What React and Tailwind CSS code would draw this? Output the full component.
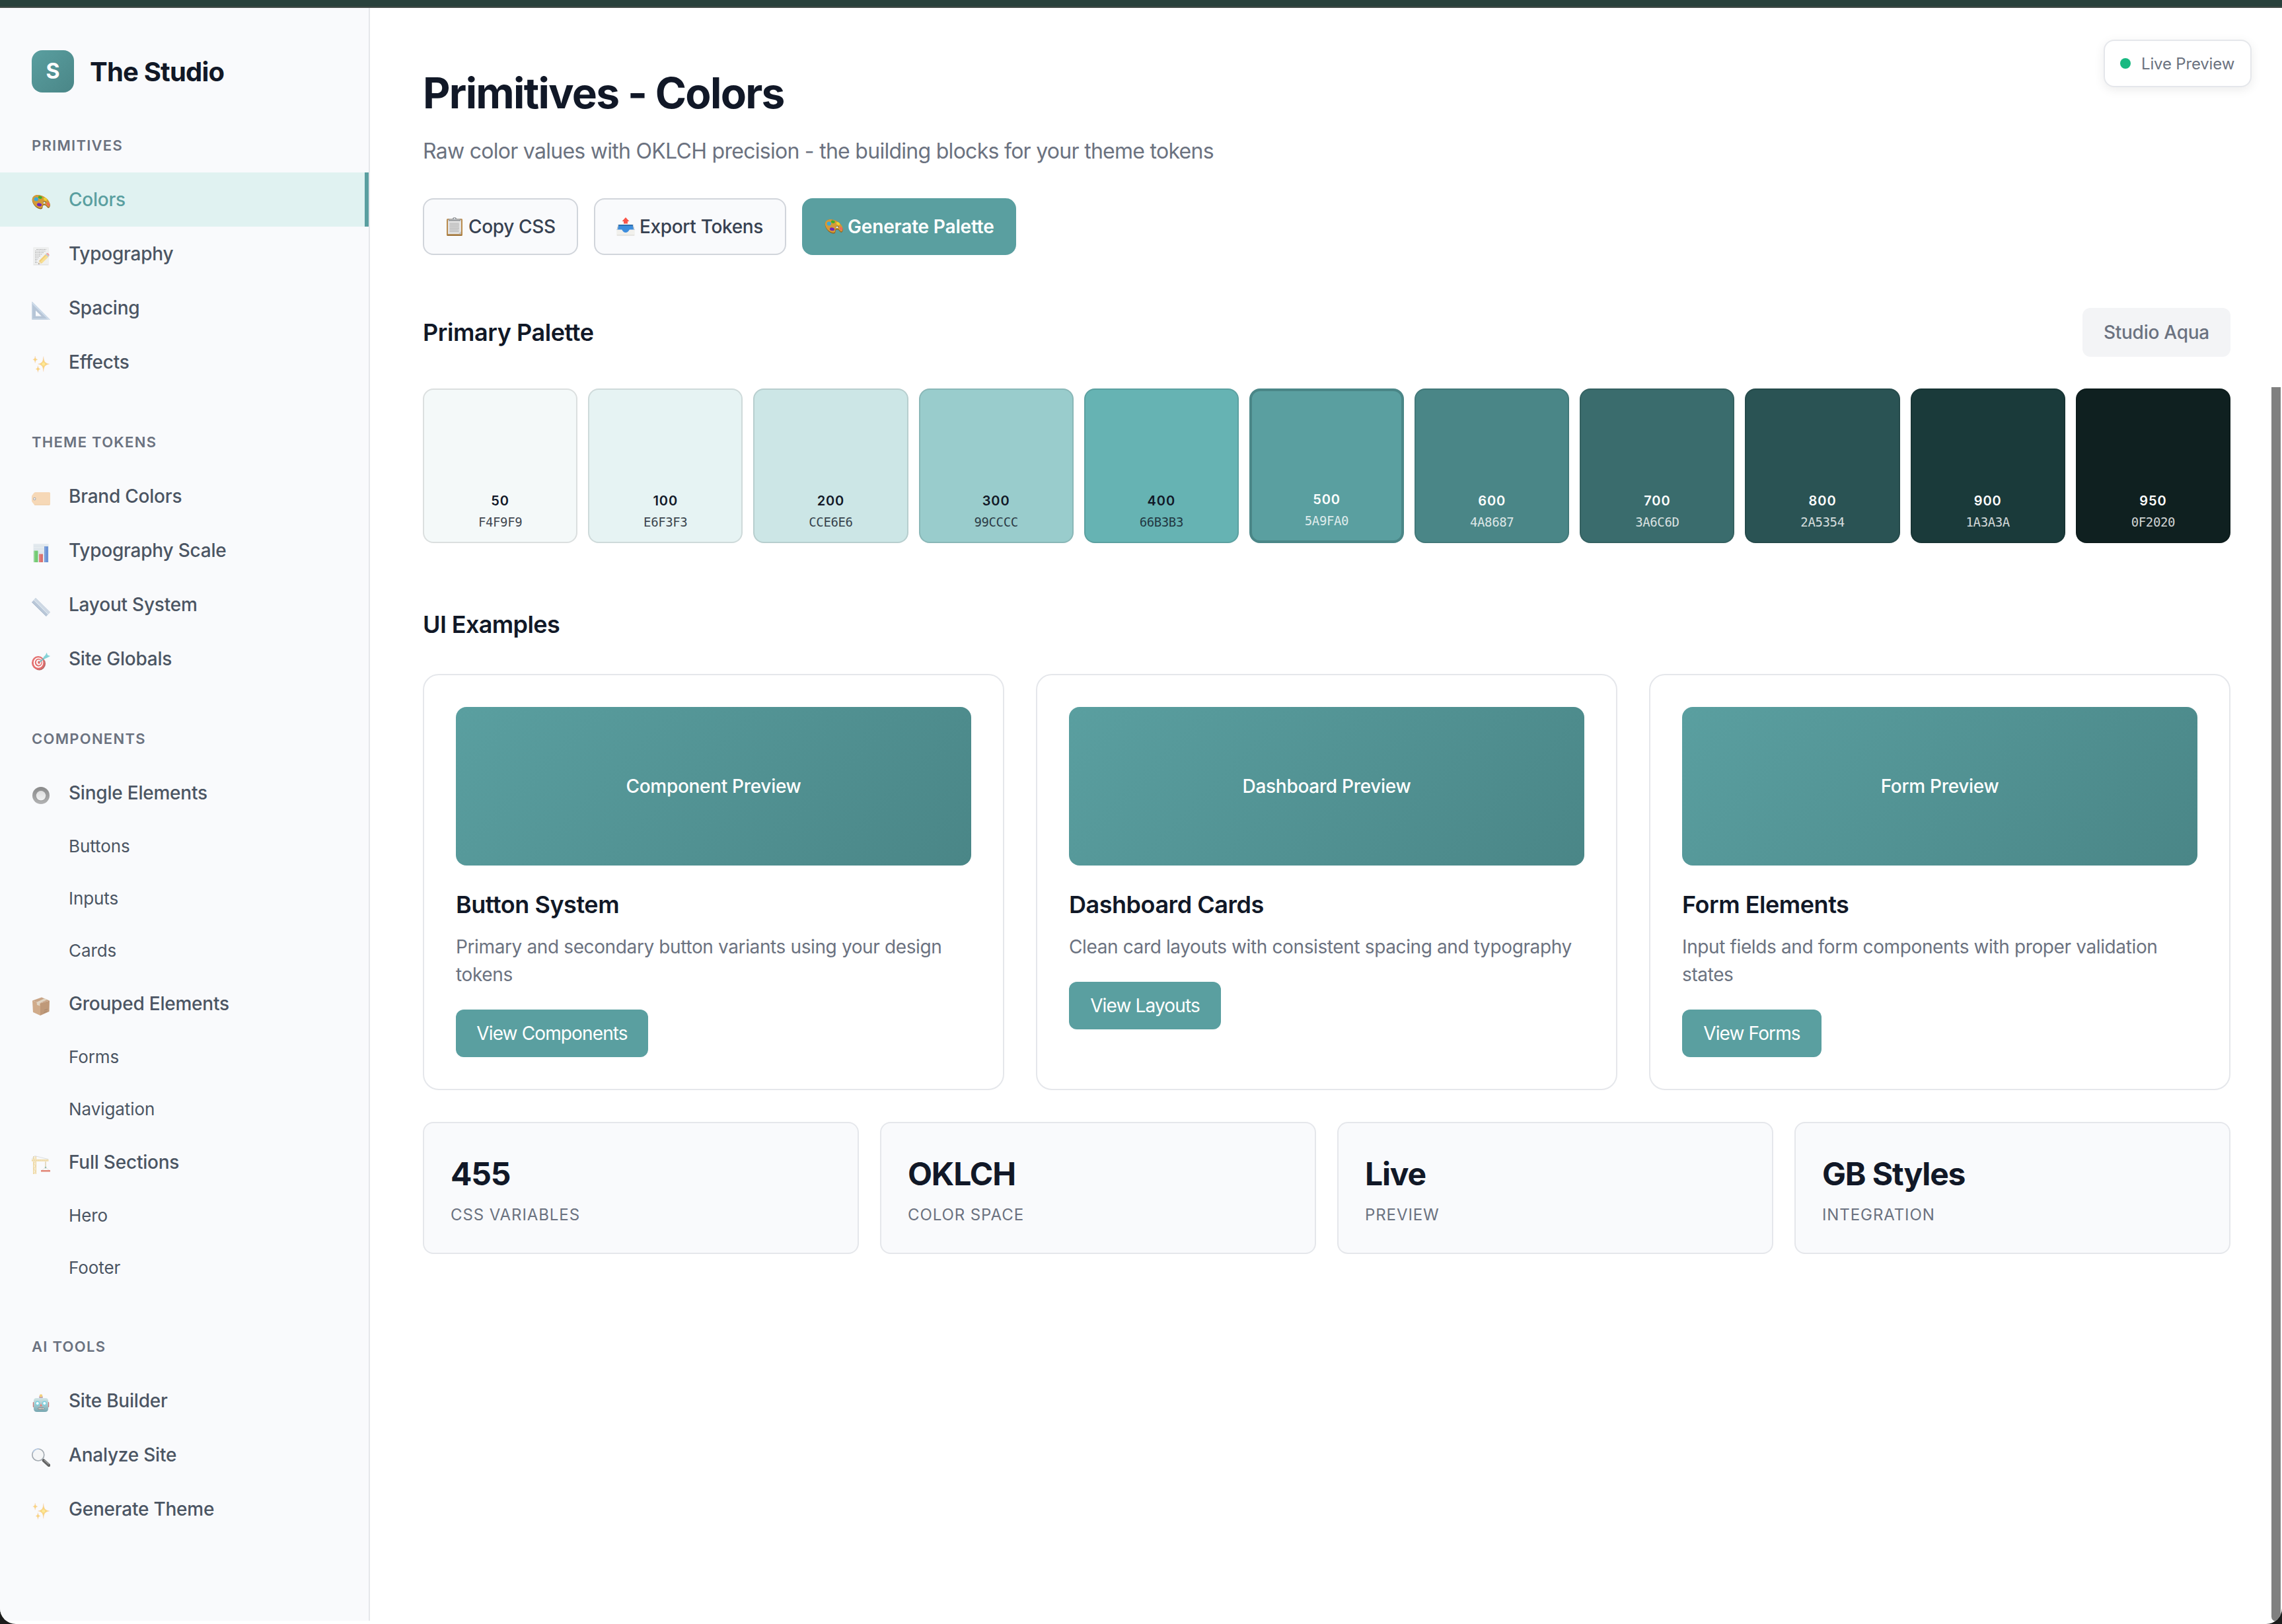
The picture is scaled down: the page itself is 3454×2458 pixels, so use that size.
const PaletteIcon = () => (
  <svg viewBox="0 0 28 28" className="size-7 shrink-0">
    <path d="M1 13C-.5 6 5 2.500 11 3.500C19 4.500 27 11 27.800 18C28 21.500 26 23.500 24.500 22.500C22.500 21 21.500 18 18.500 18.500C15.500 19 17.500 22 15.500 24C12.500 26 3 21.500 1 13Z" fill="#8f5a14" />
    <path d="M1 12C-.2 5.500 5 2.500 11 3.200C19 4 26.800 10.500 27.600 17C27.800 20.500 26 22.300 24.500 21.300C22.500 19.800 21.500 16.800 18.300 17.300C15 17.800 17.300 21 15.300 22.700C12.500 24.700 3 20.500 1 12Z" fill="#d39a38" />
    <ellipse cx="6.800" cy="9.500" rx="3.200" ry="3" fill="#3aa9d8" />
    <ellipse cx="12.800" cy="6.800" rx="3" ry="2.100" fill="#3fae2c" transform="rotate(15 12.8 6.800)" />
    <ellipse cx="20.500" cy="9.500" rx="3" ry="2" fill="#efd02f" transform="rotate(35 20.500 9.500)" />
    <ellipse cx="25" cy="17" rx="1.700" ry="3" fill="#f0675c" transform="rotate(-25 25 17)" />
    <ellipse cx="11.500" cy="17.800" rx="3.600" ry="2.400" fill="#7226b8" transform="rotate(10 11.500 17.800)" />
    <ellipse cx="19.300" cy="14.500" rx="2.200" ry="1.700" fill="#5c4218" />
    <ellipse cx="19.100" cy="14.900" rx="1.700" ry="1.300" fill="#e5f3f1" />
  </svg>
);

const MemoIcon = () => (
  <svg viewBox="0 0 28 28" className="size-7 shrink-0">
    <rect x="2.500" y="0.500" width="23" height="27" fill="#dcdcdc" />
    <rect x="3" y="0.500" width="22" height="25.500" fill="#ececec" />
    <g stroke="#8e8e8e" strokeWidth="0.900" strokeDasharray="2.600 .7 1.500 .6">
      <path d="M7 3.500H22M5 6H21M5 8.500H18M5 11H16M5 13.500H13M5 16H11M5 18.500H9M5 21H8M5 23.500H9" />
    </g>
    <path d="M10 26L11.500 20.500L20.500 11.200L24.800 15L15.500 24.200Z" fill="#eeba3c" />
    <path d="M13 22L22.300 12.600L24.800 15L15.500 24.200Z" fill="#f7d468" />
    <path d="M10 26L11.300 21.300L14.800 24.500Z" fill="#eed9b4" />
    <path d="M10 26L10.500 24.200L11.900 25.500Z" fill="#444" />
    <path d="M20.500 11.200L22 9.700L26.200 13.500L24.800 15Z" fill="#a3b9c2" />
    <path d="M22 9.700C23.800 7.500 28 10.800 26.200 13.500Z" fill="#ee7679" />
  </svg>
);

const TriangleIcon = () => (
  <svg viewBox="0 0 28 28" className="size-7 shrink-0">
    <path d="M0.500 0.500L28 28H0.500ZM6 14V22.500H14.800Z" fill="#9aafc8" fillRule="evenodd" />
    <path d="M0.500 0.500L28 28H25L0.500 4Z" fill="#b9cde1" />
    <path d="M1 26.900H27" stroke="#c4d5e5" strokeWidth="1.200" />
    <path d="M1 4V27" stroke="#a9bfd5" />
  </svg>
);

const SparklesIcon = () => (
  <svg viewBox="0 0 28 28" className="size-7 shrink-0">
    <g fill="#f8c64b" stroke="#f9a97e" strokeOpacity="0.500" strokeWidth="0.500">
      <path d="M17.800 1.500C18.600 9.500 19.600 11.500 26.800 13C19.600 14.500 18.600 16.500 17.800 24.500C17 16.500 16 14.500 9.500 13C16 11.500 17 9.500 17.800 1.500Z" />
      <path d="M5.200 1C5.700 4.600 6.300 5.500 9 6.200C6.300 6.900 5.700 7.800 5.200 11.400C4.700 7.800 4.200 6.900 1.800 6.200C4.200 5.500 4.700 4.600 5.200 1Z" />
      <path d="M9.400 15.500C9.900 19 10.500 19.900 13.200 20.600C10.500 21.300 9.900 22.200 9.400 25.600C8.900 22.200 8.400 21.300 6 20.600C8.400 19.900 8.900 19 9.400 15.500Z" />
    </g>
    <circle cx="17.800" cy="13" r="2.500" fill="#ffe16a" />
  </svg>
);

const TagIcon = () => (
  <svg viewBox="0 0 28 28" className="size-7 shrink-0">
    <path d="M5.500 4H26.500Q28 4 28 5.500V22Q28 23.500 26.500 23.500H5.500Q4.500 23.500 3.500 22.500L.8 19Q0 18 0 17V10.500Q0 9.500 .8 8.500L3.500 5Q4.500 4 5.500 4Z" fill="#f6cb9b" />
    <path d="M4 23H27" stroke="#e9b57d" strokeWidth="0.900" />
    <circle cx="4.300" cy="14" r="2.200" fill="#8c8685" />
    <circle cx="4.300" cy="14" r="1.200" fill="#f5f5f5" />
  </svg>
);

const ChartIcon = () => (
  <svg viewBox="0 0 28 28" className="size-7 shrink-0">
    <rect x="2.500" y="0" width="23" height="28" fill="#dce4ea" />
    <path d="M3 3.500H25M3 8H25M3 13H25M3 18H25" stroke="#c6d2dc" strokeWidth="0.700" />
    <rect x="3.300" y="10.500" width="6.200" height="17.500" fill="#3db83a" />
    <rect x="11" y="15.500" width="6" height="12.500" fill="#d03934" />
    <rect x="19" y="4" width="6" height="24" fill="#3169c6" />
    <path d="M4.500 11V28M12.300 16V28M20.300 4.500V28" stroke="#fff" strokeOpacity="0.250" />
  </svg>
);

const RulerIcon = () => (
  <svg viewBox="0 0 28 28" className="size-7 shrink-0">
    <path d="M6 0L28 21.500L22 28L0 6.500Z" fill="#9fb2c9" />
    <path d="M6 0L28 21.500L25.800 23.800L3.800 2.400Z" fill="#bccbdb" />
    <path d="M3.500 3L25 24.500" stroke="#d4e0ea" strokeWidth="1.200" />
    <path d="M.5 6.500L22 27.500" stroke="#8aa0ba" />
  </svg>
);

const TargetIcon = () => (
  <svg viewBox="0 0 28 28" className="size-7 shrink-0">
    <ellipse cx="11.500" cy="17.500" rx="9.500" ry="10" fill="#9c2c2c" />
    <ellipse cx="9.800" cy="16.300" rx="9.800" ry="10.300" fill="#dc3533" />
    <ellipse cx="10" cy="16" rx="7.300" ry="7.800" fill="#fff" />
    <ellipse cx="10.300" cy="15.800" rx="5.600" ry="6" fill="#dc3533" />
    <ellipse cx="10.700" cy="15.600" rx="3.800" ry="4.100" fill="#fff" />
    <ellipse cx="11" cy="15.500" rx="2" ry="2.200" fill="#dc3533" />
    <path d="M12 15L19.500 8.500" stroke="#35a8ad" strokeWidth="1.700" />
    <path d="M17.500 8L20.800 4.500L22.700 .7L24 4.500L28 6L23.500 8.500L19.500 10.300Z" fill="#55c3c8" />
  </svg>
);

const RadioIcon = () => (
  <svg viewBox="0 0 28 28" className="size-7 shrink-0">
    <defs>
      <linearGradient id="rim" x1="0" y1="0" x2="0" y2="1">
        <stop offset="0" stopColor="#5a5a5a" />
        <stop offset="1" stopColor="#969696" />
      </linearGradient>
      <linearGradient id="knob" x1="0" y1="0" x2="0" y2="1">
        <stop offset="0" stopColor="#d2d2d2" />
        <stop offset="1" stopColor="#efefef" />
      </linearGradient>
    </defs>
    <circle cx="14" cy="14" r="13" fill="url(#rim)" />
    <circle cx="14" cy="14" r="8.300" fill="#6d6d6d" />
    <circle cx="14" cy="14.300" r="7.300" fill="url(#knob)" />
  </svg>
);

const BoxIcon = () => (
  <svg viewBox="0 0 28 28" className="size-7 shrink-0">
    <path d="M1 5.500L13 9.500V28L2 23Z" fill="#c08a5b" />
    <path d="M27 5.500L13 9.500V28L26.500 22Z" fill="#a77143" />
    <path d="M1 5.500L15 .5L27 5.500L13 9.500Z" fill="#b68256" />
    <path d="M7.500 7.800L19.500 2.200L23.500 3.900L12 9.500L12.500 13.500L8 12Z" fill="#d8c6ad" />
    <path d="M19 20L24 18.300M18 23.500L23 21.700" stroke="#80532d" strokeWidth="0.900" />
  </svg>
);

const CraneIcon = () => (
  <svg viewBox="0 0 28 28" className="size-7 shrink-0">
    <path d="M2.500 1H6.500V28H2.500Z" fill="#f6e8c0" />
    <path d="M2.500 4L6.500 8L2.500 12L6.500 16L2.500 20L6.500 24L2.500 28M2.500 1V28M6.500 1V28" stroke="#e5bf6c" strokeWidth="0.900" fill="none" />
    <rect x="0" y="5.500" width="25.500" height="3.500" fill="#f1dca4" />
    <path d="M0 7.200H25" stroke="#dfba65" strokeDasharray="1.500 1.500" />
    <path d="M0 5.500L4.500 .5L25 5.500" stroke="#b4bac0" strokeWidth="0.600" fill="none" />
    <path d="M21 9V19.500" stroke="#c3a55c" />
    <path d="M14.500 23L21 18L27.500 23" stroke="#cdc6bb" strokeWidth="0.600" fill="none" />
    <circle cx="21" cy="18" r="1.300" fill="#6da394" />
    <rect x="14" y="22" width="14" height="2.500" fill="#d9563f" />
  </svg>
);

const RobotIcon = () => (
  <svg viewBox="0 0 28 28" className="size-7 shrink-0">
    <defs>
      <linearGradient id="bot" x1="0" y1="0" x2="0" y2="1">
        <stop offset="0" stopColor="#c2dedf" />
        <stop offset="1" stopColor="#3f8492" />
      </linearGradient>
    </defs>
    <rect x="1.800" y="12" width="3" height="8" rx="1" fill="#bd4543" />
    <rect x="23.200" y="12" width="3" height="8" rx="1" fill="#bd4543" />
    <rect x="11.300" y="3" width="5.400" height="3.500" rx="1" fill="#9877a2" />
    <circle cx="14" cy="2.600" r="2.300" fill="#f1bd48" />
    <path d="M7 6H21Q25 6 25 11V22Q25 27 20 27H8Q3 27 3 22V11Q3 6 7 6Z" fill="url(#bot)" />
    <circle cx="8.700" cy="14" r="3.400" fill="#44bfd4" />
    <circle cx="19.300" cy="14" r="3.400" fill="#44bfd4" />
    <circle cx="8.700" cy="14" r="2.100" fill="#fff" />
    <circle cx="19.300" cy="14" r="2.100" fill="#fff" />
    <path d="M14 14.500L16 18.500H12Z" fill="#df4b3f" />
    <rect x="9.500" y="20.500" width="9" height="3" rx="1" fill="#53463f" />
    <path d="M10.500 22H18" stroke="#fff" strokeWidth="1.600" strokeDasharray="1.400 .7" />
  </svg>
);

const MagnifierIcon = () => (
  <svg viewBox="0 0 28 28" className="size-7 shrink-0">
    <path d="M15.500 16L18.500 18.500" stroke="#777" strokeWidth="2.600" />
    <path d="M18 18.500L26 25.800" stroke="#222" strokeWidth="4.600" strokeLinecap="round" />
    <path d="M18.800 17.800L26 24.300" stroke="#8a8a8a" strokeWidth="1.100" />
    <circle cx="9.800" cy="10" r="9" fill="#f4f5f6" stroke="#7d8790" strokeWidth="1.600" />
    <path d="M2 6.500A9 9 0 0 1 11 1" stroke="#9dbbe0" strokeWidth="1.500" fill="none" />
  </svg>
);

const ClipboardIcon = () => (
  <svg viewBox="0 0 28 28" className="size-7 shrink-0">
    <rect x="2" y="2" width="24" height="26" rx="1.500" fill="#b98b4d" />
    <path d="M3 27H25" stroke="#946a32" strokeWidth="1.400" />
    <rect x="4" y="3.500" width="20" height="21.800" fill="#e4e4e4" />
    <path d="M20 25.300L24 21V25.300Z" fill="#c2c2c2" />
    <rect x="6.500" y="8" width="14.500" height="14.500" fill="#d0d0d0" />
    <path d="M6.500 9H20M6.500 11.500H21M6.500 14H20M6.500 16.500H21M6.500 19H19M6.500 21.500H20" stroke="#c0c0c0" strokeWidth="1.100" />
    <path d="M5 5.500V3.500Q5 2.200 6.500 2.200H10.500L12 .6Q14 -.8 16 .6L17.500 2.200H21.500Q23 2.200 23 3.500V5.500Z" fill="#8e9093" />
    <path d="M6 3.300H22" stroke="#c3c6c9" strokeWidth="1.200" />
    <circle cx="14" cy="1.800" r="1" fill="#eef3f7" />
  </svg>
);

const OutboxIcon = () => (
  <svg viewBox="0 0 28 28" className="size-7 shrink-0">
    <path d="M3 11H25L27.500 19H.5Z" fill="#24619f" />
    <path d="M3.500 12.500H24.500L26 19L20 23H8L2 19Z" fill="#3d8ddd" />
    <path d="M2.800 10.500L1.500 18.500M25.200 10.500L26.500 18.500" stroke="#d9dad8" strokeWidth="1.200" />
    <path d="M.3 18.500H8C9 18.500 9.500 23 14 23C18.500 23 19 18.500 20 18.500H27.700V26.500Q27.700 27.500 26.700 27.500H1.300Q.3 27.500 .3 26.500Z" fill="#f1f0ec" />
    <path d="M.8 27H27.200" stroke="#d5d4cf" strokeWidth="0.900" />
    <path d="M14 0L19.500 6H17V9.500H11V6H8.500Z" fill="#fb5549" />
  </svg>
);

const GROUPS = [
  {
    title: "PRIMITIVES",
    items: [
      { label: "Colors", Icon: PaletteIcon, active: true },
      { label: "Typography", Icon: MemoIcon },
      { label: "Spacing", Icon: TriangleIcon },
      { label: "Effects", Icon: SparklesIcon },
    ],
  },
  {
    title: "THEME TOKENS",
    items: [
      { label: "Brand Colors", Icon: TagIcon },
      { label: "Typography Scale", Icon: ChartIcon },
      { label: "Layout System", Icon: RulerIcon },
      { label: "Site Globals", Icon: TargetIcon },
    ],
  },
  {
    title: "COMPONENTS",
    items: [
      { label: "Single Elements", Icon: RadioIcon },
      { label: "Buttons" },
      { label: "Inputs" },
      { label: "Cards" },
      { label: "Grouped Elements", Icon: BoxIcon },
      { label: "Forms" },
      { label: "Navigation" },
      { label: "Full Sections", Icon: CraneIcon },
      { label: "Hero" },
      { label: "Footer" },
    ],
  },
  {
    title: "AI TOOLS",
    items: [
      { label: "Site Builder", Icon: RobotIcon },
      { label: "Analyze Site", Icon: MagnifierIcon },
      { label: "Generate Theme", Icon: SparklesIcon },
    ],
  },
];

const SWATCHES = [
  { step: "50", hex: "F4F9F9", look: "bg-[#f4f9f9] text-[#111827]" },
  { step: "100", hex: "E6F3F3", look: "bg-[#e6f3f3] text-[#111827]" },
  { step: "200", hex: "CCE6E6", look: "bg-[#cce6e6] text-[#111827]" },
  { step: "300", hex: "99CCCC", look: "bg-[#99cccc] text-[#111827]" },
  { step: "400", hex: "66B3B3", look: "bg-[#66b3b3] text-[#111827]" },
  { step: "500", hex: "5A9FA0", look: "bg-[#5a9fa0] text-white", selected: true },
  { step: "600", hex: "4A8687", look: "bg-[#4a8687] text-white" },
  { step: "700", hex: "3A6C6D", look: "bg-[#3a6c6d] text-white" },
  { step: "800", hex: "2A5354", look: "bg-[#2a5354] text-white" },
  { step: "900", hex: "1A3A3A", look: "bg-[#1a3a3a] text-white" },
  { step: "950", hex: "0F2020", look: "bg-[#0f2020] text-white" },
];

const EXAMPLES = [
  {
    preview: "Component Preview",
    title: "Button System",
    text: "Primary and secondary button variants using your design tokens",
    action: "View Components",
    size: "w-[291px]",
  },
  {
    preview: "Dashboard Preview",
    title: "Dashboard Cards",
    text: "Clean card layouts with consistent spacing and typography",
    action: "View Layouts",
    size: "w-[230px]",
  },
  {
    preview: "Form Preview",
    title: "Form Elements",
    text: "Input fields and form components with proper validation states",
    action: "View Forms",
    size: "w-[211px]",
  },
];

const STATS = [
  { value: "455", label: "CSS VARIABLES" },
  { value: "OKLCH", label: "COLOR SPACE" },
  { value: "Live", label: "PREVIEW" },
  { value: "GB Styles", label: "INTEGRATION" },
];

function NavItem({ label, Icon, active }) {
  if (!Icon) {
    return (
      <a className="flex h-[79px] items-center pl-26 text-[26px] leading-[39px] tracking-[-0.003em] text-[#4b5563]">
        {label}
      </a>
    );
  }
  return (
    <a
      className={
        active
          ? "flex h-[82px] items-center border-r-6 border-[#5a9fa0] bg-[#e0f2f1] pl-12 text-[28px] leading-[42px] font-medium tracking-[-0.008em] text-[#5a9fa0]"
          : "flex h-[82px] items-center pl-12 text-[28px] leading-[42px] font-medium tracking-[-0.008em] text-[#4b5563]"
      }
    >
      <span className={active ? "mr-6 w-8 pt-2" : "mr-6 w-8 pt-2 opacity-70"}>
        <Icon />
      </span>
      {label}
    </a>
  );
}

function Sidebar() {
  return (
    <aside className="mb-[5px] w-[560px] shrink-0 border-r-2 border-[#e5e7eb] bg-[#f9fafc] pt-16">
      <div className="mb-16 flex items-center gap-6 px-12">
        <div className="flex size-16 items-center justify-center rounded-[16px] bg-linear-[135deg,#5a9fa0,#4a8687] text-[32px] font-bold text-white">
          S
        </div>
        <div className="pt-0.5 text-[40px] leading-[60px] font-bold tracking-[-0.02em] text-[#111827]">The Studio</div>
      </div>
      {GROUPS.map((group) => (
        <section key={group.title} className="mb-16">
          <h2 className="mb-6 px-12 text-[22px] leading-[33px] font-semibold tracking-[0.058em] text-[#6b7280]">
            {group.title}
          </h2>
          {group.items.map((item) => (
            <NavItem key={item.label} {...item} />
          ))}
        </section>
      ))}
    </aside>
  );
}

const ACTION =
  "flex h-[86px] items-center gap-[7px] rounded-[16px] border-2 pl-8 text-[28px] leading-[42px] whitespace-nowrap";

export default function App() {
  return (
    <div className="h-[2458px] w-[3454px] bg-[#1c1c1c] font-['Inter',sans-serif]">
      <div className="relative flex h-full flex-col overflow-hidden rounded-b-[24px] bg-white">
        <div className="h-3 shrink-0 border-b-2 border-[#454c49] bg-[#29413c]" />
        <div className="flex min-h-0 flex-1">
          <Sidebar />
          <main className="flex-1 pt-20 pr-[78px] pl-20">
            <header className="mb-20">
              <h1 className="mb-4 pt-0.5 text-[64px] leading-[94px] font-bold tracking-[-0.026em] text-[#111827]">
                Primitives - Colors
              </h1>
              <p className="mb-12 pt-0.5 text-[32px] leading-[46px] tracking-[-0.0225em] text-[#6b7280]">
                Raw color values with OKLCH precision - the building blocks for your theme tokens
              </p>
              <div className="flex gap-6">
                <button className={`${ACTION} w-[235px] border-[#d1d5db] bg-[#f9fafc] font-medium tracking-[-0.012em] text-[#374151]`}>
                  <ClipboardIcon />
                  Copy CSS
                </button>
                <button className={`${ACTION} w-[291px] border-[#d1d5db] bg-[#f9fafc] font-medium tracking-[-0.012em] text-[#374151]`}>
                  <OutboxIcon />
                  Export Tokens
                </button>
                <button className={`${ACTION} w-[324px] border-[#5a9fa0] bg-[#5a9fa0] font-semibold tracking-[-0.006em] text-white`}>
                  <PaletteIcon />
                  Generate Palette
                </button>
              </div>
            </header>

            <section className="mb-24">
              <div className="mb-12 flex items-center justify-between">
                <h2 className="text-[36px] leading-[54px] font-semibold tracking-[-0.012em] text-[#111827]">
                  Primary Palette
                </h2>
                <span className="rounded-[12px] bg-[#f3f4f6] px-8 py-4 text-[28px] leading-[42px] font-medium tracking-[-0.009em] text-[#6b7280]">
                  Studio Aqua
                </span>
              </div>
              <div className="grid grid-cols-11 gap-4">
                {SWATCHES.map(({ step, hex, look, selected }) => (
                  <div
                    key={step}
                    className={`flex h-[234px] flex-col items-center justify-end rounded-[16px] pb-4 ${
                      selected ? "border-4 border-[#4a8687]" : "border-2 border-black/10"
                    } ${look}`}
                  >
                    <span className="mb-1 text-[20px] leading-[30px] font-semibold tracking-[0.045em]">{step}</span>
                    <span className="font-['DejaVu_Sans_Mono',monospace] text-[19px] leading-[27px] tracking-[-0.02em] opacity-80">
                      {hex}
                    </span>
                  </div>
                ))}
              </div>
            </section>

            <h2 className="mb-12 text-[36px] leading-[54px] font-semibold tracking-[-0.017em] text-[#111827]">
              UI Examples
            </h2>
            <div className="mb-12 grid h-[630px] grid-cols-3 gap-12">
              {EXAMPLES.map((card) => (
                <article key={card.title} className="rounded-[24px] border-2 border-[#e5e7eb] p-12">
                  <div className="mb-8 flex h-60 items-center justify-center rounded-[16px] bg-linear-[135deg,#5a9fa0,#4a8687] text-[28px] font-medium tracking-[-0.011em] text-white">
                    {card.preview}
                  </div>
                  <h3 className="mb-4 text-[36px] leading-[54px] font-semibold tracking-[-0.013em] text-[#111827]">
                    {card.title}
                  </h3>
                  <p className="mb-8 text-[28px] leading-[42px] tracking-[-0.0135em] text-[#6b7280]">{card.text}</p>
                  <button
                    className={`h-[72px] rounded-[12px] bg-[#5a9fa0] text-[28px] tracking-[-0.031em] whitespace-nowrap text-white ${card.size}`}
                  >
                    {card.action}
                  </button>
                </article>
              ))}
            </div>

            <div className="grid grid-cols-4 gap-8">
              {STATS.map(({ value, label }) => (
                <div key={label} className="h-[200px] rounded-[16px] border-2 border-[#e5e7eb] bg-[#f9fafc] px-10 pt-[41px]">
                  <div className="mb-2 text-[48px] leading-[72px] font-bold tracking-[-0.024em] text-[#111827]">
                    {value}
                  </div>
                  <div className="text-[24px] leading-[36px] tracking-[0.038em] text-[#6b7280]">{label}</div>
                </div>
              ))}
            </div>
          </main>
        </div>

        <div className="absolute top-15 right-[46px] flex h-18 w-[224px] items-center gap-4 rounded-[16px] border-2 border-[#e5e7eb] bg-white pl-[23px] text-[24px] tracking-[-0.007em] whitespace-nowrap text-[#6b7280] shadow-[0_4px_16px_rgba(0,0,0,0.08)]">
          <span className="size-4 rounded-full bg-[#18b981]" />
          <span className="pt-0.5">Live Preview</span>
        </div>
        <div className="absolute top-[586px] right-0.5 bottom-1 w-3.5 rounded-b-full bg-[#808080]" />
      </div>
    </div>
  );
}
